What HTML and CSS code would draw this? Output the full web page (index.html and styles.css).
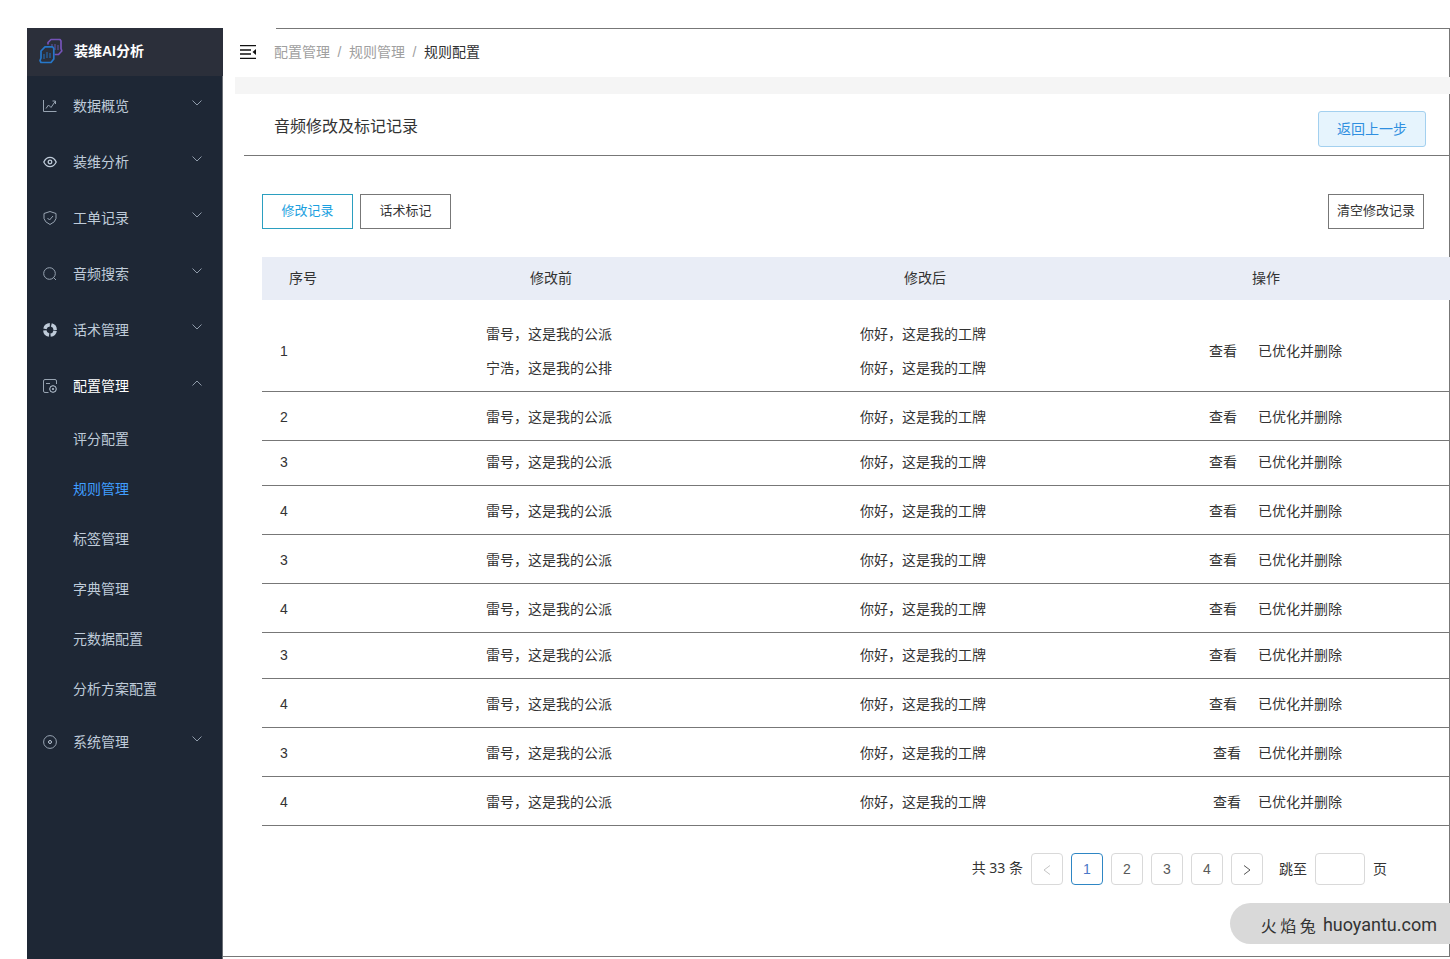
FILE: index.html
```html
<!DOCTYPE html>
<html lang="zh-CN">
<head>
<meta charset="utf-8">
<title>装维AI分析</title>
<link rel="stylesheet" href="styles.css">
</head>
<body>
<svg class="sprite" aria-hidden="true">
  <symbol id="down" viewBox="0 0 10 6"><path d="M0.5 0.5 5 5 9.5 0.5"/></symbol>
  <symbol id="up" viewBox="0 0 10 6"><path d="M0.5 5.5 5 1 9.5 5.5"/></symbol>
</svg>
<div class="app">
  <aside class="sidebar">
    <div class="brand">
      <svg class="logo" viewBox="0 0 24 26" fill="none" stroke-width="1.7" stroke-linejoin="round">
        <path stroke="#7553b8" d="M9 6.500V4.500L12 1.500H21L22 3V10.500L22.800 13 19.500 16.500H15.500"/>
        <path stroke="#5b4f96" stroke-width="1.200" d="M13 6V8.500M16 6V12M19 7V12"/>
        <path stroke="#2677c9" d="M2 20V13L6 8.800H13.500L14.800 10.500V21L12 24.500H2L1 22.500Z"/>
        <path stroke="#2567a8" stroke-width="1.200" d="M5 16V21M8 14V20M11 15V20"/>
      </svg>
      <span>装维AI分析</span>
    </div>
    <nav class="menu">
      <a class="item" href="#"><svg class="icon" viewBox="0 0 14 14"><path d="M.5 1V12.500H13.500M3 9.500 5.500 6 8 8.500 12.500 2M9.500 2H12.500V5"/></svg><span>数据概览</span><svg class="arrow"><use href="#down"/></svg></a>
      <a class="item" href="#"><svg class="icon bright" viewBox="0 0 14 14"><path stroke-width="1.300" d="M.8 7Q3 2.300 7 2.300T13.200 7Q11 11.700 7 11.700T.8 7Z"/><circle cx="7" cy="7" r="1.800" stroke-width="1.300"/></svg><span>装维分析</span><svg class="arrow"><use href="#down"/></svg></a>
      <a class="item" href="#"><svg class="icon" viewBox="0 0 14 14"><path d="M7 .5 13 2.500V7.500Q12.500 11 7 13.500 1.500 11 1 7.500V2.500ZM4.500 7 6.500 9 10 5"/></svg><span>工单记录</span><svg class="arrow"><use href="#down"/></svg></a>
      <a class="item" href="#"><svg class="icon" viewBox="0 0 14 14"><circle cx="6.500" cy="6.500" r="5.800"/><path d="M10.500 10.500 13 13"/></svg><span>音频搜索</span><svg class="arrow"><use href="#down"/></svg></a>
      <a class="item" href="#"><svg class="icon bright" viewBox="0 0 14 14"><circle cx="7" cy="7" r="5.200" stroke-width="3.400" stroke-dasharray="6.568 1.600" stroke-dashoffset="-.8"/></svg><span>话术管理</span><svg class="arrow"><use href="#down"/></svg></a>
      <a class="item open" href="#"><svg class="icon" viewBox="0 0 14 14"><path d="M13.500 5V2Q13.500 .5 12 .5H2Q.5 .5 .5 2V12Q.5 13.500 2 13.500H5.500M3 4.500H7"/><circle cx="10" cy="10" r="3.300" stroke="#bfcbd9"/><circle cx="10" cy="10" r="1" fill="#bfcbd9" stroke="none"/></svg><span>配置管理</span><svg class="arrow"><use href="#up"/></svg></a>
      <a class="sub" href="#">评分配置</a>
      <a class="sub current" href="#">规则管理</a>
      <a class="sub" href="#">标签管理</a>
      <a class="sub" href="#">字典管理</a>
      <a class="sub" href="#">元数据配置</a>
      <a class="sub" href="#">分析方案配置</a>
      <a class="item" href="#"><svg class="icon" viewBox="0 0 14 14"><circle cx="7" cy="7" r="6.400"/><circle cx="7" cy="7" r="1.500" stroke="#bfcbd9"/></svg><span>系统管理</span><svg class="arrow"><use href="#down"/></svg></a>
    </nav>
  </aside>
  <main class="main">
    <header class="topbar">
      <button class="fold" type="button" aria-label="折叠菜单"><svg viewBox="0 0 16 14"><path d="M0 .5H16M0 5H11M0 9H11M0 13.500H16" fill="none" stroke="#111" stroke-width="1.500"/><path d="M16 4V10L12.500 7Z" fill="#111"/></svg></button>
      <nav class="crumbs"><a href="#">配置管理</a><i>/</i><a href="#">规则管理</a><i>/</i><span>规则配置</span></nav>
    </header>
    <div class="band"></div>
    <section class="heading">
      <h1>音频修改及标记记录</h1>
      <button class="back" type="button">返回上一步</button>
    </section>
    <section class="content">
      <div class="tools">
        <button class="tab active" type="button">修改记录</button>
        <button class="tab" type="button">话术标记</button>
        <button class="clear" type="button">清空修改记录</button>
      </div>
      <table class="records">
        <thead><tr><th class="no">序号</th><th class="text">修改前</th><th class="text">修改后</th><th class="ops">操作</th></tr></thead>
        <tbody>
          <tr class="double"><td class="no">1</td><td>雷号，这是我的公派<br>宁浩，这是我的公排</td><td>你好，这是我的工牌<br>你好，这是我的工牌</td><td class="ops"><a href="#">查看</a><a href="#">已优化并删除</a></td></tr>
          <tr><td class="no">2</td><td>雷号，这是我的公派</td><td>你好，这是我的工牌</td><td class="ops"><a href="#">查看</a><a href="#">已优化并删除</a></td></tr>
          <tr class="short"><td class="no">3</td><td>雷号，这是我的公派</td><td>你好，这是我的工牌</td><td class="ops"><a href="#">查看</a><a href="#">已优化并删除</a></td></tr>
          <tr><td class="no">4</td><td>雷号，这是我的公派</td><td>你好，这是我的工牌</td><td class="ops"><a href="#">查看</a><a href="#">已优化并删除</a></td></tr>
          <tr><td class="no">3</td><td>雷号，这是我的公派</td><td>你好，这是我的工牌</td><td class="ops"><a href="#">查看</a><a href="#">已优化并删除</a></td></tr>
          <tr><td class="no">4</td><td>雷号，这是我的公派</td><td>你好，这是我的工牌</td><td class="ops"><a href="#">查看</a><a href="#">已优化并删除</a></td></tr>
          <tr class="medium"><td class="no">3</td><td>雷号，这是我的公派</td><td>你好，这是我的工牌</td><td class="ops"><a href="#">查看</a><a href="#">已优化并删除</a></td></tr>
          <tr><td class="no">4</td><td>雷号，这是我的公派</td><td>你好，这是我的工牌</td><td class="ops"><a href="#">查看</a><a href="#">已优化并删除</a></td></tr>
          <tr class="tight"><td class="no">3</td><td>雷号，这是我的公派</td><td>你好，这是我的工牌</td><td class="ops"><a href="#">查看</a><a href="#">已优化并删除</a></td></tr>
          <tr class="tight"><td class="no">4</td><td>雷号，这是我的公派</td><td>你好，这是我的工牌</td><td class="ops"><a href="#">查看</a><a href="#">已优化并删除</a></td></tr>
        </tbody>
      </table>
      <nav class="pager" aria-label="分页">
        <span class="total">共 33 条</span>
        <button type="button" disabled aria-label="上一页"><svg viewBox="0 0 8 10"><path d="M7 .5 1 5 7 9.500"/></svg></button>
        <button type="button" class="on">1</button>
        <button type="button">2</button>
        <button type="button">3</button>
        <button type="button">4</button>
        <button type="button" aria-label="下一页"><svg viewBox="0 0 8 10"><path d="M1 .5 7 5 1 9.500"/></svg></button>
        <label class="jump" for="page">跳至</label>
        <input id="page" type="text">
        <span>页</span>
      </nav>
    </section>
  </main>
</div>
<div class="mark"><span>火 焰 兔</span><span class="site">huoyantu.com</span></div>
</body>
</html>
```
FILE: styles.css
```css
* { box-sizing: border-box; }
body {
  margin: 0;
  background: #fff;
  color: #333;
  font: 14px/20px "Liberation Sans", "Noto Sans CJK SC", sans-serif;
}
a { color: inherit; text-decoration: none; }
button, input { font: inherit; color: inherit; padding: 0; }
.sprite { display: none; }
.app { display: flex; min-height: 100vh; padding: 28px 0 0 27px; }

.sidebar {
  display: flex;
  flex-direction: column;
  flex: none;
  width: 196px;
  background: #1e2735;
  color: #bfcbd9;
}
.brand {
  display: flex;
  align-items: center;
  gap: 11px;
  height: 48px;
  padding: 0 12px 2px;
  background: #2b2f3a;
  color: #fff;
  font-weight: bold;
}
.logo { width: 24px; height: 26px; }
.menu { flex: 1; padding-top: 2px; border-right: 1px solid #6b6f76; }
.item { display: flex; align-items: center; height: 56px; padding: 0 20px 0 16px; }
.item span { flex: 1; margin-left: 16px; }
.icon { width: 14px; height: 14px; fill: none; stroke: #98a4b2; }
.bright { stroke: #bfcbd9; }
.arrow { width: 10px; height: 6px; margin-bottom: 6px; fill: none; stroke: #8f9baa; }
.open { color: #fff; }
.sub { display: block; padding-left: 46px; line-height: 50px; }
.current { color: #409eff; }

.main {
  display: flex;
  flex-direction: column;
  flex: 1;
  min-width: 0;
  margin-bottom: 2px;
  border-right: 1px solid #777;
  border-bottom: 1px solid #777;
}
.topbar {
  display: flex;
  align-items: center;
  gap: 18px;
  height: 49px;
  padding: 0 0 2px 17px;
  background: linear-gradient(#777, #777) 53px 0 / 100% 1px no-repeat;
}
.fold { width: 16px; height: 14px; border: 0; background: none; }
.fold svg { display: block; width: 16px; height: 14px; }
.crumbs { display: flex; color: #a0a0a0; }
.crumbs i { width: 19px; text-align: center; font-style: normal; }
.crumbs span { color: #303133; }
.band { height: 17px; margin: 0 -1px 0 12px; background: #f5f5f5; }
.heading {
  display: flex;
  align-items: center;
  justify-content: space-between;
  height: 62px;
  margin-left: 21px;
  padding: 8px 23px 0 30px;
  border-bottom: 1px solid #777;
}
h1 { margin: 0 0 4px; font-size: 16px; font-weight: normal; }
.back {
  width: 108px;
  height: 36px;
  border: 1px solid #a3d0ef;
  border-radius: 3px;
  background: #e6f4fd;
  color: #2f8fe0;
}
.content { flex: 1; padding: 38px 0 0 39px; }
.tools { display: flex; gap: 7px; padding-right: 25px; font-size: 13px; }
.tab, .clear { width: 91px; height: 35px; padding-bottom: 2px; border: 1px solid #777; background: #fff; }
.active { border-color: #2b9fc0; color: #1a9fe0; }
.clear { width: 96px; margin-left: auto; }

.records { width: calc(100% + 1px); margin-top: 28px; border-collapse: separate; border-spacing: 0; table-layout: fixed; text-align: center; }
.records th { height: 43px; padding: 0 0 2px 4px; background: #e9edf6; font-weight: normal; }
.records td { height: 49px; padding: 2px 0 0; border-bottom: 1px solid #777; }
.records .short td { height: 45px; padding-top: 0; padding-bottom: 2px; }
.records .medium td { height: 46px; padding-top: 0; padding-bottom: 1px; }
.records .double td { height: 92px; padding-top: 10px; line-height: 34px; }
.records .no { width: 100px; padding-left: 18px; text-align: left; }
.records th.no { padding-left: 27px; }
.text { width: 374px; }
.records th.ops { padding-right: 32px; }
.records td.ops { padding-right: 9px; }
.ops a + a { margin-left: 21px; }
.tight .ops a:first-child { margin-left: 4px; }
.tight .ops a + a { margin-left: 17px; }

.pager { display: flex; align-items: center; gap: 8px; justify-content: flex-end; padding: 27px 62px 0 0; }
.pager button, .pager input { width: 32px; height: 32px; border: 1px solid #d9d9d9; border-radius: 4px; background: #fff; color: #595959; }
.pager .on { border-color: #2e86c4; color: #4a78c8; }
.pager svg { display: block; width: 8px; height: 10px; margin: 2px auto 0; fill: none; stroke: #555; }
.pager button:disabled svg { stroke: #c4c4c4; }
.pager input { width: 50px; padding: 0 8px; }
.total { padding-bottom: 2px; font-family: "Noto Sans", "Noto Sans CJK SC", sans-serif; }
.jump { margin-left: 8px; }

.mark {
  position: absolute;
  right: 0;
  top: 903px;
  display: flex;
  align-items: center;
  gap: 7px;
  height: 41px;
  padding: 3px 13px 0 31px;
  border-radius: 21px 0 0 21px;
  background: #d9d9d9;
  font: 16px/24px "Noto Sans CJK SC", sans-serif;
}
.site { font: 18px/24px Roboto, sans-serif; }
```
